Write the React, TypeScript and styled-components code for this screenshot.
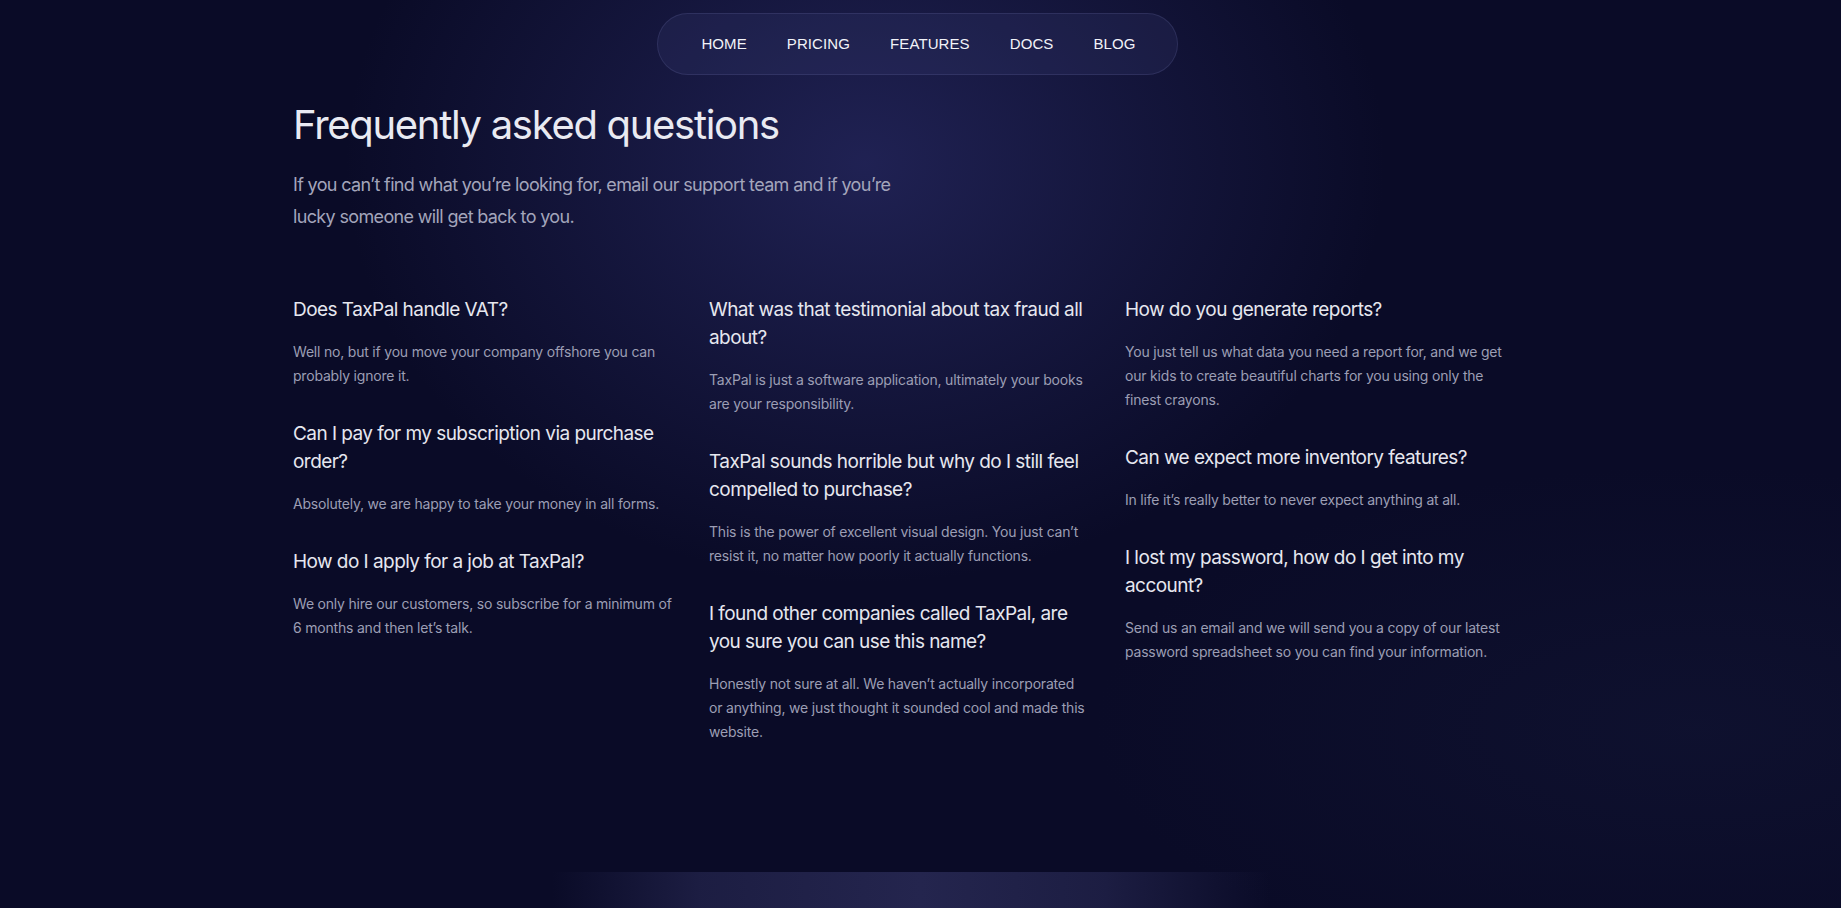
import React from 'react';
import styled, { createGlobalStyle } from 'styled-components';

const GlobalStyle = createGlobalStyle`
  * { box-sizing: border-box; }
  html, body { margin: 0; padding: 0; }
  body {
    background: #0a0b27;
    font-family: Inter, "Noto Sans", sans-serif;
    -webkit-font-smoothing: antialiased;
  }
`;

const Page = styled.div`
  height: 908px;
  background:
    radial-gradient(ellipse 520px 420px at 47% 18%, rgba(40, 42, 100, 0.72), rgba(40, 42, 100, 0) 100%),
    radial-gradient(ellipse 600px 260px at 92% 80%, rgba(20, 24, 56, 0.45), rgba(20, 24, 56, 0) 100%),
    #0a0b27;
  overflow: hidden;
`;

const NavWrap = styled.div`
  display: flex;
  justify-content: center;
  padding: 13px 6px 0 0;
`;

const Nav = styled.nav`
  display: flex;
  align-items: center;
  gap: 40px;
  height: 62px;
  padding: 0 41px 0 43px;
  border-radius: 999px;
  background: rgba(60, 64, 120, 0.22);
  border: 1.5px solid rgba(110, 114, 170, 0.22);
`;

const NavLink = styled.a`
  font-family: "Liberation Sans", Arial, sans-serif;
  font-size: 15px;
  color: #f2f3f8;
  text-decoration: none;
  letter-spacing: 0.1px;
  margin-top: -2px;
`;

const Section = styled.section`
  width: 1255px;
  margin: 0 auto;
  padding: 26px 0 0;
  height: 797px;
`;

const Title = styled.h2`
  margin: 0;
  font-size: 40px;
  line-height: 48px;
  font-weight: 400;
  letter-spacing: -1.3px;
  color: #e9eaf2;
`;

const Lead = styled.p`
  margin: 20px 0 0;
  max-width: 610px;
  font-size: 18px;
  line-height: 32px;
  color: #a3a5bb;
  letter-spacing: -0.65px;
`;

const Grid = styled.div`
  display: grid;
  grid-template-columns: repeat(3, 384px);
  gap: 32px;
  margin-top: 63px;
`;

const Column = styled.ul`
  list-style: none;
  margin: 0;
  padding: 0;
  display: flex;
  flex-direction: column;
  gap: 32px;
`;

const Item = styled.li``;

const Question = styled.h3`
  margin: 0;
  font-size: 19px;
  line-height: 28px;
  font-weight: 400;
  color: #e6e7ef;
  letter-spacing: -0.55px;
`;

const Answer = styled.p`
  margin: 16px 0 0;
  max-width: 380px;
  font-size: 14px;
  line-height: 24px;
  color: #9c9eb4;
  letter-spacing: -0.2px;
`;

const Footer = styled.footer`
  height: 140px;
  background: linear-gradient(
    90deg,
    rgba(36, 37, 78, 0) 30%,
    rgba(36, 37, 78, 0.7) 38%,
    #24254e 50%,
    rgba(36, 37, 78, 0.7) 60%,
    rgba(36, 37, 78, 0) 69%
  );
`;

const faqs: { q: string; a: string }[][] = [
  [
    {
      q: 'Does TaxPal handle VAT?',
      a: 'Well no, but if you move your company offshore you can probably ignore it.',
    },
    {
      q: 'Can I pay for my subscription via purchase order?',
      a: 'Absolutely, we are happy to take your money in all forms.',
    },
    {
      q: 'How do I apply for a job at TaxPal?',
      a: 'We only hire our customers, so subscribe for a minimum of 6 months and then let\u2019s talk.',
    },
  ],
  [
    {
      q: 'What was that testimonial about tax fraud all about?',
      a: 'TaxPal is just a software application, ultimately your books are your responsibility.',
    },
    {
      q: 'TaxPal sounds horrible but why do I still feel compelled to purchase?',
      a: 'This is the power of excellent visual design. You just can\u2019t resist it, no matter how poorly it actually functions.',
    },
    {
      q: 'I found other companies called TaxPal, are you sure you can use this name?',
      a: 'Honestly not sure at all. We haven\u2019t actually incorporated or anything, we just thought it sounded cool and made this website.',
    },
  ],
  [
    {
      q: 'How do you generate reports?',
      a: 'You just tell us what data you need a report for, and we get our kids to create beautiful charts for you using only the finest crayons.',
    },
    {
      q: 'Can we expect more inventory features?',
      a: 'In life it\u2019s really better to never expect anything at all.',
    },
    {
      q: 'I lost my password, how do I get into my account?',
      a: 'Send us an email and we will send you a copy of our latest password spreadsheet so you can find your information.',
    },
  ],
];

const links = ['HOME', 'PRICING', 'FEATURES', 'DOCS', 'BLOG'];

export default function App() {
  return (
    <>
      <GlobalStyle />
      <Page>
        <NavWrap>
          <Nav>
            {links.map((l) => (
              <NavLink key={l} href="#">
                {l}
              </NavLink>
            ))}
          </Nav>
        </NavWrap>

        <Section>
          <Title>Frequently asked questions</Title>
          <Lead>
            If you can’t find what you’re looking for, email our support team and if you’re lucky
            someone will get back to you.
          </Lead>

          <Grid>
            {faqs.map((col, i) => (
              <Column key={i}>
                {col.map((f) => (
                  <Item key={f.q}>
                    <Question>{f.q}</Question>
                    <Answer>{f.a}</Answer>
                  </Item>
                ))}
              </Column>
            ))}
          </Grid>
        </Section>

        <Footer />
      </Page>
    </>
  );
}
